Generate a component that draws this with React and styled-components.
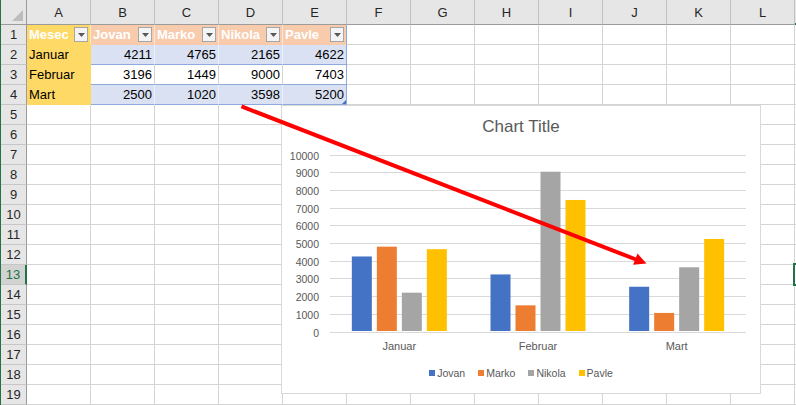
import React from 'react';
import styled, { createGlobalStyle } from 'styled-components';

const GlobalStyle = createGlobalStyle`
    html, body {
        margin: 0;
        padding: 0;
        background: #ffffff;
        overflow: hidden;
    }
    body {
        font-family: "Liberation Sans", Arial, sans-serif;
    }
`;

const COLS = ['A', 'B', 'C', 'D', 'E', 'F', 'G', 'H', 'I', 'J', 'K', 'L'];
const ROWS = Array.from({ length: 19 }, (_, i) => i + 1);
const SELECTED_ROW = 13;

const series = [
    { name: 'Jovan', color: '#4472c4', values: [4211, 3196, 2500] },
    { name: 'Marko', color: '#ed7d31', values: [4765, 1449, 1020] },
    { name: 'Nikola', color: '#a5a5a5', values: [2165, 9000, 3598] },
    { name: 'Pavle', color: '#ffc000', values: [4622, 7403, 5200] },
];
const months = ['Januar', 'Februar', 'Mart'];

const YELLOW = '#ffd966';
const PEACH = '#f8cbad';
const BAND = '#d9e1f2';
const TABLE_LINE = '#8ea9db';
const GRID = '#d4d4d4';
const GREEN = '#217346';

// what a cell of the sheet looks like
const cellProps = (r, c) => {
    if (r === 1 && c <= 4) {
        const bg = c === 0 ? YELLOW : PEACH;
        return {
            text: ['Mesec', ...series.map((s) => s.name)][c],
            bg,
            vline: c === 4 ? TABLE_LINE : 'rgba(255,255,255,0.55)',
            hline: bg,
            head: true,
        };
    }
    if (r >= 2 && r <= 4 && c === 0) {
        return { text: months[r - 2], bg: YELLOW, vline: YELLOW, hline: YELLOW };
    }
    if (r >= 2 && r <= 4 && c <= 4) {
        const banded = r % 2 === 0;
        return {
            text: String(series[c - 1].values[r - 2]),
            bg: banded ? BAND : '#ffffff',
            vline: c === 4 ? TABLE_LINE : banded ? '#edf1f9' : GRID,
            hline: TABLE_LINE,
            number: true,
            handle: r === 4 && c === 4,
        };
    }
    return {};
};

const App = () => {
    return (
        <>
            <GlobalStyle />
            <Page>
                <Frame />
                <Sheet>
                    <HeaderRow>
                        <Corner>
                            <svg width="25" height="24" viewBox="0 0 25 24">
                                <polygon points="11,21 22,21 22,10" fill="#bdbdbd" />
                            </svg>
                        </Corner>
                        {COLS.map((c) => (
                            <ColHead key={c}>{c}</ColHead>
                        ))}
                        <ColHeadEdge />
                    </HeaderRow>
                    {ROWS.map((r) => (
                        <Row key={r}>
                            <RowHead $selected={r === SELECTED_ROW}>{r}</RowHead>
                            {COLS.map((col, c) => {
                                const p = cellProps(r, c);
                                return (
                                    <Cell
                                        key={col}
                                        $bg={p.bg}
                                        $vline={p.vline}
                                        $hline={p.hline}
                                        $number={p.number}
                                        $head={p.head}
                                    >
                                        {p.text && <span>{p.text}</span>}
                                        {p.head && (
                                            <FilterButton>
                                                <svg width="7" height="4" viewBox="0 0 7 4">
                                                    <polygon points="0,0 7,0 3.5,4" fill="#595959" />
                                                </svg>
                                            </FilterButton>
                                        )}
                                        {p.handle && <ResizeHandle />}
                                    </Cell>
                                );
                            })}
                            <CellEdge />
                        </Row>
                    ))}
                </Sheet>

                <Chart>
                    <ChartTitle>Chart Title</ChartTitle>
                    <PlotArea />
                    <Legend>
                        {series.map((s) => (
                            <LegendItem key={s.name}>
                                <Swatch $color={s.color} />
                                {s.name}
                            </LegendItem>
                        ))}
                    </Legend>
                </Chart>

                <Arrow width="796" height="405" viewBox="0 0 796 405">
                    <line x1="241.5" y1="106.4" x2="636" y2="259.5" stroke="#ff0000" strokeWidth="4" />
                    <polygon points="646.5,263.5 633.1,264.8 637.5,253.6" fill="#ff0000" />
                </Arrow>

                <Selection />
            </Page>
        </>
    );
};

const PlotArea = () => {
    const x0 = 48;
    const x1 = 464;
    const y0 = 183.5;
    const scale = 177 / 10000;
    const slot = (x1 - x0) / 3;
    const ticks = Array.from({ length: 11 }, (_, i) => i * 1000);

    return (
        <svg width="478" height="210" viewBox="0 0 478 210">
            {ticks.map((t) => {
                const y = Math.round(y0 - t * scale) + 0.5;
                return (
                    <g key={t}>
                        <line x1={x0} x2={x1} y1={y} y2={y} stroke="#d9d9d9" strokeWidth="1" />
                        <text
                            x="37"
                            y={y}
                            textAnchor="end"
                            dominantBaseline="central"
                            fontSize="10.5"
                            fill="#595959"
                            fontFamily="Liberation Sans, Arial, sans-serif"
                        >
                            {t}
                        </text>
                    </g>
                );
            })}
            {months.map((m, mi) => {
                const center = x0 + slot * mi + slot / 2;
                return (
                    <g key={m}>
                        {series.map((s, si) => {
                            const h = s.values[mi] * scale;
                            return (
                                <rect
                                    key={s.name}
                                    x={center - 47.5 + si * 25}
                                    y={y0 - 0.5 - h}
                                    width="20"
                                    height={h}
                                    fill={s.color}
                                />
                            );
                        })}
                        <text
                            x={center}
                            y="198"
                            textAnchor="middle"
                            dominantBaseline="central"
                            fontSize="11"
                            fill="#595959"
                            fontFamily="Liberation Sans, Arial, sans-serif"
                        >
                            {m}
                        </text>
                    </g>
                );
            })}
        </svg>
    );
};

export default App;

const Page = styled.div`
    position: relative;
    width: 796px;
    height: 405px;
    display: flex;
    overflow: hidden;
    background: #ffffff;
`
const Frame = styled.div`
    width: 1px;
    flex-shrink: 0;
    background: ${GREEN};
`
const Sheet = styled.div`
    display: flex;
    flex-direction: column;
    width: 795px;
`
const HeaderRow = styled.div`
    display: flex;
    height: 25px;
`
const Corner = styled.div`
    width: 26px;
    height: 25px;
    box-sizing: border-box;
    background: #e6e6e6;
    border-right: 1px solid #9b9b9b;
    border-bottom: 1px solid #9b9b9b;
    svg {
        display: block;
    }
`
const ColHead = styled.div`
    width: 64px;
    height: 25px;
    box-sizing: border-box;
    background: #e6e6e6;
    border-right: 1px solid #c2c2c2;
    border-bottom: 1px solid #9b9b9b;
    display: flex;
    align-items: center;
    justify-content: center;
    font-size: 13px;
    color: #262626;
`
const ColHeadEdge = styled.div`
    width: 1px;
    height: 25px;
    box-sizing: border-box;
    background: #e6e6e6;
    border-bottom: 2px solid ${GREEN};
`
const Row = styled.div`
    display: flex;
    height: 20px;
`
const RowHead = styled.div`
    width: 26px;
    height: 20px;
    box-sizing: border-box;
    background: ${(p) => (p.$selected ? '#d2d2d2' : '#e6e6e6')};
    color: ${(p) => (p.$selected ? GREEN : '#262626')};
    border-right: ${(p) => (p.$selected ? `2px solid ${GREEN}` : '1px solid #9b9b9b')};
    border-bottom: 1px solid #c6c6c6;
    display: flex;
    align-items: center;
    justify-content: center;
    font-size: 13px;
`
const Cell = styled.div`
    position: relative;
    width: 64px;
    height: 20px;
    box-sizing: border-box;
    padding: 0 2px 0 2px;
    background: ${(p) => p.$bg || '#ffffff'};
    border-right: 1px solid ${(p) => p.$vline || GRID};
    border-bottom: 1px solid ${(p) => p.$hline || GRID};
    display: flex;
    align-items: center;
    justify-content: ${(p) => (p.$number ? 'flex-end' : p.$head ? 'space-between' : 'flex-start')};
    font-size: 13px;
    font-weight: ${(p) => (p.$head ? 700 : 400)};
    color: ${(p) => (p.$head ? '#ffffff' : '#000000')};
    white-space: nowrap;
    overflow: hidden;
`
const CellEdge = styled.div`
    width: 1px;
    height: 20px;
    box-sizing: border-box;
    border-bottom: 1px solid ${GRID};
`
const FilterButton = styled.div`
    width: 14px;
    height: 15px;
    box-sizing: border-box;
    background: #f4f4f4;
    border: 1px solid #a6a6a6;
    display: flex;
    align-items: center;
    justify-content: center;
    svg {
        display: block;
    }
`
const ResizeHandle = styled.div`
    position: absolute;
    right: 0;
    bottom: 0;
    width: 0;
    height: 0;
    border-left: 4px solid transparent;
    border-bottom: 4px solid #4472c4;
`
const Chart = styled.div`
    position: absolute;
    left: 281px;
    top: 105px;
    width: 480px;
    height: 289px;
    box-sizing: border-box;
    background: #ffffff;
    border: 1px solid #d9d9d9;
    display: flex;
    flex-direction: column;
    svg {
        display: block;
    }
`
const ChartTitle = styled.div`
    height: 42px;
    line-height: 42px;
    text-align: center;
    font-size: 17px;
    color: #595959;
`
const Legend = styled.div`
    height: 30px;
    display: flex;
    align-items: center;
    justify-content: center;
    gap: 13px;
    font-size: 10.5px;
    color: #595959;
`
const LegendItem = styled.div`
    display: flex;
    align-items: center;
    gap: 2px;
`
const Swatch = styled.span`
    width: 6px;
    height: 6px;
    background: ${(p) => p.$color};
`
const Arrow = styled.svg`
    position: absolute;
    left: 0;
    top: 0;
    pointer-events: none;
`
const Selection = styled.div`
    position: absolute;
    left: 793px;
    top: 263px;
    width: 20px;
    height: 23px;
    box-sizing: border-box;
    border: 2px solid ${GREEN};
`
